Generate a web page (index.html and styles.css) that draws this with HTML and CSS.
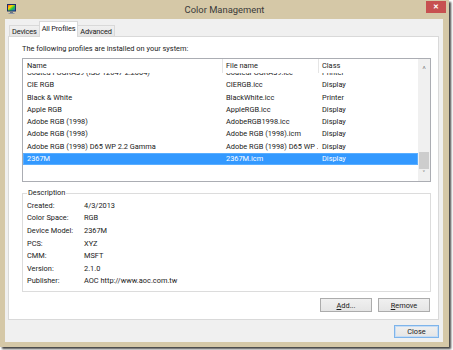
FILE: index.html
```html
<!DOCTYPE html>
<html lang="en">
<head>
<meta charset="UTF-8">
<title>Color Management</title>
<link rel="stylesheet" href="styles.css">
</head>
<body>

<div class="window">
    <div class="titlebar">
        <svg class="app-icon" width="9" height="10" viewBox="0 0 9 10">
            <defs>
                <linearGradient id="spectrum" x1="0" y1="0" x2="1" y2="1">
                    <stop offset="0" stop-color="#ff2a2a"/>
                    <stop offset="0.35" stop-color="#ffd400"/>
                    <stop offset="0.6" stop-color="#24c640"/>
                    <stop offset="1" stop-color="#2050ff"/>
                </linearGradient>
            </defs>
            <rect x="0.5" y="0.5" width="8" height="6.5" fill="url(#spectrum)" stroke="#1d2f6b"/>
            <rect x="3" y="7.5" width="3" height="1.5" fill="#6b7585"/>
            <rect x="1.5" y="9" width="6" height="1" fill="#8d95a3"/>
        </svg>
        <span class="title">Color Management</span>
        <span class="close-btn">&#x2715;</span>
    </div>

    <div class="client">
        <div class="tabs">
            <span class="tab">Devices</span>
            <span class="tab active">All Profiles</span>
            <span class="tab">Advanced</span>
        </div>

        <div class="panel">
            <p class="intro">The following profiles are installed on your system:</p>

            <div class="list">
                <div class="list-main">
                    <div class="row header">
                        <span>Name</span>
                        <span>File name</span>
                        <span>Class</span>
                    </div>
                    <div class="rows">
                        <div class="row first">
                            <span>Coated FOGRA39 (ISO 12647-2:2004)</span>
                            <span>CoatedFOGRA39.icc</span>
                            <span>Printer</span>
                        </div>
                        <div class="row">
                            <span>CIE RGB</span>
                            <span>CIERGB.icc</span>
                            <span>Display</span>
                        </div>
                        <div class="row">
                            <span>Black &amp; White</span>
                            <span>BlackWhite.icc</span>
                            <span>Printer</span>
                        </div>
                        <div class="row">
                            <span>Apple RGB</span>
                            <span>AppleRGB.icc</span>
                            <span>Display</span>
                        </div>
                        <div class="row">
                            <span>Adobe RGB (1998)</span>
                            <span>AdobeRGB1998.icc</span>
                            <span>Display</span>
                        </div>
                        <div class="row">
                            <span>Adobe RGB (1998)</span>
                            <span>Adobe RGB (1998).icm</span>
                            <span>Display</span>
                        </div>
                        <div class="row">
                            <span>Adobe RGB (1998) D65 WP 2.2 Gamma</span>
                            <span>Adobe RGB (1998) D65 WP ...</span>
                            <span>Display</span>
                        </div>
                        <div class="row selected">
                            <span>2367M</span>
                            <span>2367M.icm</span>
                            <span>Display</span>
                        </div>
                    </div>
                </div>
                <div class="scrollbar">
                    <span class="arrow">&#x2038;</span>
                    <span class="track"><span class="thumb"></span></span>
                    <span class="arrow">&#x2C5;</span>
                </div>
            </div>

            <fieldset class="description">
                <legend>Description</legend>
                <div class="info">
                    <span>Created:</span><span>4/3/2013</span>
                    <span>Color Space:</span><span>RGB</span>
                    <span>Device Model:</span><span>2367M</span>
                    <span>PCS:</span><span>XYZ</span>
                    <span>CMM:</span><span>MSFT</span>
                    <span>Version:</span><span>2.1.0</span>
                    <span>Publisher:</span><span>AOC http://www.aoc.com.tw</span>
                </div>
            </fieldset>

            <div class="actions">
                <button class="btn"><u>A</u>dd...</button>
                <button class="btn"><u>R</u>emove</button>
            </div>
        </div>

        <div class="footer">
            <button class="btn default">Close</button>
        </div>
    </div>
</div>

</body>
</html>
```

FILE: styles.css
```css
body {
    margin: 0;
    width: 453px;
    height: 350px;
    background-color: #fff;
    font-family: Roboto, "Noto Sans", sans-serif;
    font-size: 7.4px;
    color: #1a1a1a;
    overflow: hidden;
}
.window {
    width: 449px;
    height: 347px;
    background-color: #d5c8a7;
    box-shadow: 2px 2px 2px rgba(0, 0, 0, 0.75);
    display: flex;
    flex-direction: column;
}
.titlebar {
    height: 19px;
    display: grid;
    grid-template-columns: 1fr auto 1fr;
    align-items: start;
}
.app-icon {
    margin: 4px 0 0 7px;
}
.title {
    font-size: 9.4px;
    color: #3a3a3a;
    line-height: 20px;
}
.close-btn {
    justify-self: end;
    margin: 1px 3px 0 0;
    width: 20px;
    height: 12px;
    background-color: #c75050;
    color: #fff;
    font-size: 7px;
    font-weight: bold;
    line-height: 12px;
    text-align: center;
}
.client {
    flex: 1;
    margin: 0 6px 5px 5px;
    background-color: #f0f0f0;
    display: flex;
    flex-direction: column;
}
.tabs {
    display: flex;
    align-items: flex-end;
    padding: 3px 0 0 4px;
    height: 14px;
}
.tab {
    height: 11px;
    line-height: 11px;
    padding: 0 2px;
    letter-spacing: -0.15px;
    border: 1px solid #d9d9d9;
    border-bottom: none;
    background: linear-gradient(#f0f0f0, #e5e5e5);
    margin-bottom: -1px;
}
.tab.active {
    height: 15px;
    line-height: 14px;
    padding: 0 2px;
    background: #fff;
    position: relative;
    z-index: 1;
    margin-left: -1px;
    margin-right: -1px;
}
.panel {
    margin: 0 4px 0 3px;
    background-color: #fff;
    border: 1px solid #d9d9d9;
    padding: 0 7px 7px 13px;
}
.intro {
    margin: 7px 0 5px;
    line-height: 9px;
}
.list {
    display: flex;
    border: 1px solid #abadb3;
    height: 122px;
}
.list-main {
    flex: 1;
    display: flex;
    flex-direction: column;
}
.row {
    display: grid;
    grid-template-columns: 199px 96px 1fr;
    height: 12.3px;
    line-height: 12.3px;
    white-space: nowrap;
}
.row span {
    padding-left: 4px;
    overflow: hidden;
}
.row.header {
    height: 14px;
    line-height: 14px;
}
.row.header span + span {
    border-left: 1px solid #e5e5e5;
    padding-left: 3px;
}
.rows {
    flex: 1;
    overflow: hidden;
}
.row.first {
    margin-top: -6px;
}
.row.selected {
    background-color: #3399ff;
    color: #fff;
    box-shadow: inset 0 0 0 1px #5aaeff;
}
.scrollbar {
    width: 12px;
    background-color: #f0f0f0;
    display: flex;
    flex-direction: column;
    align-items: center;
    color: #606060;
}
.arrow {
    height: 12px;
    line-height: 12px;
    font-size: 8px;
}
.track {
    flex: 1;
    width: 100%;
    display: flex;
    flex-direction: column;
    justify-content: flex-end;
}
.thumb {
    height: 17px;
    margin: 0 1px;
    background-color: #cdcdcd;
}
.description {
    margin: 5px 0 0;
    padding: 0 4px 4px;
    border: 1px solid #dcdcdc;
}
.description legend {
    padding: 0 1px;
    line-height: 12px;
}
.info {
    display: grid;
    grid-template-columns: 57px 1fr;
    grid-auto-rows: 12.6px;
    align-items: center;
}
.actions {
    display: flex;
    justify-content: flex-end;
    gap: 6px;
    margin-top: 6px;
    padding-right: 1px;
}
.btn {
    width: 52px;
    height: 14px;
    padding: 0;
    font-family: inherit;
    font-size: 7.4px;
    color: #1a1a1a;
    border: 1px solid #acacac;
    background: linear-gradient(#f0f0f0, #e5e5e5);
}
.footer {
    display: flex;
    justify-content: flex-end;
    padding: 5px 4px 0 0;
}
.btn.default {
    width: 45px;
    height: 13px;
    border-color: #7eb4ea;
    box-shadow: inset 0 0 0 1px #c5dcf5;
}
```
